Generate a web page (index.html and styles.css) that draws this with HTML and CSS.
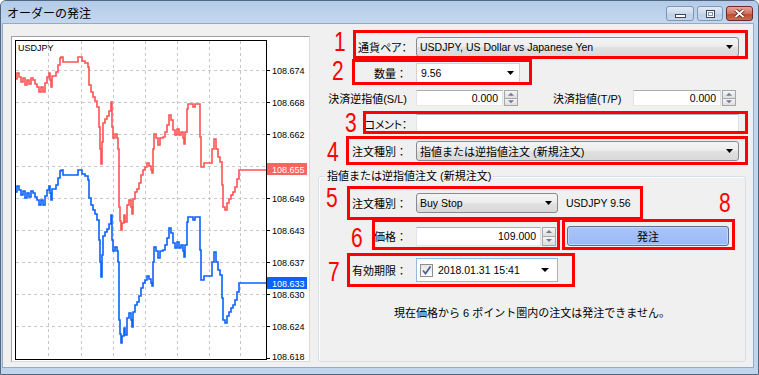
FILE: index.html
```html
<!DOCTYPE html>
<html lang="ja">
<head>
    <meta charset="UTF-8">
    <title>オーダーの発注</title>
    <link rel="stylesheet" href="styles.css">
</head>
<body>
<div class="window">
    <div class="titlebar">
        <span class="title">オーダーの発注</span>
        <div class="caption">
            <span class="cbtn"><i class="g-min"></i></span>
            <span class="cbtn"><i class="g-max"></i></span>
            <span class="cbtn close">
                <svg width="13" height="9" viewBox="0 0 13 9"><path d="M2.5 1L10.5 8M10.5 1L2.5 8" stroke="#4b1a14" stroke-width="3.4"/><path d="M2.5 1L10.5 8M10.5 1L2.5 8" stroke="#fff" stroke-width="1.8"/></svg>
            </span>
        </div>
    </div>

    <div class="client">
        <div class="chart-panel">
            <svg width="297" height="324" viewBox="12 37 297 324">
                <defs>
                    <clipPath id="plot"><rect x="16" y="41" width="250" height="318"/></clipPath>
                    <path id="price" d="M15 192H17V186H19V190H21V195H23V191H25V198H27V193H29V197H31V191H33V193H35V197H37V200H39V205H41V200H43V205H45V196H47V190H49V186H50V193H51V200H52V189H56V185H58V178H60V171H61V170H63V175H78V170H82V174H85V176H88V180H89V198H91V205H93V210H95V214H97V220H99V240H100V262H101V277H102V255H103V236H105V232H107V229H109V224H111V215H112V240H113V251H115V247H117V251H118V262H119V320H120V334H121V343H122V336H124V328H125V335H127V318H129V313H131V320H132V327H133V312H135V305H137V302H139V296H141V288H143V283H145V280H147V276H149V279H151V283H152V286H153V262H154V247H156V251H158V258H160V251H163V250H165V245H167V238H169V228H171V233H173V243H175V248H177V242H179V248H181V245H183V251H184V257H185V245H187V222H188V217H193V220H195V217H200V250H201V280H204V276H212V262H214V252H216V262H218V270H220V275H222V298H223V320H225V323H227V316H229V312H231V308H233V305H235V300H237V292H239V283H266"/>
                </defs>
                <g class="grid">
                    <path d="M48.5 41V359M81.5 41V359M113.5 41V359M145.5 41V359M177.5 41V359M209.5 41V359M240.5 41V359"/>
                    <path d="M16 70.5H266M16 102.5H266M16 134.5H266M16 166.5H266M16 198.5H266M16 230.5H266M16 262.5H266M16 294.5H266M16 326.5H266"/>
                </g>
                <g clip-path="url(#plot)" fill="none" stroke-width="1.6">
                    <use href="#price" class="bid"/>
                    <use href="#price" class="ask" transform="translate(0,-113)"/>
                </g>
                <rect class="frame" x="15.5" y="40.5" width="251" height="319"/>
                <path class="ticks" d="M266 70.5H270M266 102.5H270M266 134.5H270M266 198.5H270M266 230.5H270M266 262.5H270M266 294.5H270M266 326.5H270M266 358.5H270"/>
                <text class="sym" x="18" y="51">USDJPY</text>
                <g class="ax">
                    <text x="272" y="74">108.674</text>
                    <text x="272" y="106">108.668</text>
                    <text x="272" y="138">108.662</text>
                    <text x="272" y="202">108.649</text>
                    <text x="272" y="234">108.643</text>
                    <text x="272" y="266">108.637</text>
                    <text x="272" y="298">108.630</text>
                    <text x="272" y="330">108.624</text>
                    <text x="272" y="360">108.618</text>
                </g>
                <rect class="tag-ask" x="267" y="163" width="40" height="12"/>
                <text class="ax tag-text" x="272" y="172.5">108.655</text>
                <rect class="tag-bid" x="267" y="277" width="40" height="12"/>
                <text class="ax tag-text" x="272" y="286.5">108.633</text>
            </svg>
        </div>

        <div class="form">
            <div class="row r1">
                <span class="lbl kana">通貨ペア：</span>
                <div class="combo w-full"><span class="v">USDJPY, US Dollar vs Japanese Yen</span><b class="arrow"></b></div>
            </div>
            <div class="row r2">
                <span class="lbl">数量：</span>
                <div class="edit-combo w-vol"><span class="v">9.56</span><b class="arrow"></b></div>
            </div>
            <div class="row r3">
                <span class="lbl">決済逆指値(S/L)</span>
                <div class="spin w-sl"><span class="spin-val v">0.000</span><span class="spinner"><i class="up"></i><i class="dn"></i></span></div>
                <span class="lbl2">決済指値(T/P)</span>
                <div class="spin w-tp"><span class="spin-val v">0.000</span><span class="spinner"><i class="up"></i><i class="dn"></i></span></div>
            </div>
            <div class="row r4">
                <span class="lbl kana tight">コメント：</span>
                <div class="edit w-full"></div>
            </div>
            <div class="row r5">
                <span class="lbl">注文種別：</span>
                <div class="combo w-full"><span>指値または逆指値注文 (新規注文)</span><b class="arrow"></b></div>
            </div>

            <fieldset class="group">
                <legend>指値または逆指値注文 (新規注文)</legend>
                <div class="row r6">
                    <span class="lbl">注文種別：</span>
                    <div class="combo w-type"><span class="v">Buy Stop</span><b class="arrow"></b></div>
                    <span class="info v">USDJPY 9.56</span>
                </div>
                <div class="row r7">
                    <span class="lbl">価格：</span>
                    <div class="spin w-price"><span class="spin-val v">109.000</span><span class="spinner"><i class="up"></i><i class="dn"></i></span></div>
                    <span class="btn">発注</span>
                </div>
                <div class="row r8">
                    <span class="lbl">有効期限：</span>
                    <div class="date">
                        <span class="chk"><svg width="11" height="11" viewBox="0 0 11 11"><path d="M2 5.5L4.5 8.5L9.5 1.5" fill="none" stroke="#4d5f94" stroke-width="1.7"/></svg></span>
                        <span class="v">2018.01.31 15:41</span>
                        <b class="arrow"></b>
                    </div>
                </div>
                <p class="msg">現在価格から 6 ポイント圏内の注文は発注できません。</p>
            </fieldset>
        </div>
    </div>

    <!-- red annotation overlay -->
    <div class="marks">
        <div class="rbox b1"></div><span class="mnum n1">1</span>
        <div class="rbox b2"></div><span class="mnum n2">2</span>
        <div class="rbox b3"></div><span class="mnum n3">3</span>
        <div class="rbox b4"></div><span class="mnum n4">4</span>
        <div class="rbox b5"></div><span class="mnum n5">5</span>
        <div class="rbox b6"></div><span class="mnum n6">6</span>
        <div class="rbox b7"></div><span class="mnum n7">7</span>
        <div class="rbox b8"></div><span class="mnum n8">8</span>
    </div>
</div>
</body>
</html>
```

FILE: styles.css
```css
* {
    box-sizing: border-box;
}
html, body {
    margin: 0;
    padding: 0;
}
body {
    width: 759px;
    height: 375px;
    overflow: hidden;
    background: #fff;
    font-family: "Liberation Sans", "Noto Sans CJK JP", sans-serif;
    font-size: 11px;
    color: #000;
}
.window {
    position: relative;
    width: 759px;
    height: 375px;
    display: flex;
    flex-direction: column;
    background: #c1d5ec;
    border: 1px solid #51667f;
    border-radius: 6px 6px 0 0;
}

/* title bar */
.titlebar {
    height: 23px;
    flex: none;
    display: flex;
    justify-content: space-between;
    align-items: flex-start;
    background: linear-gradient(#b3cbe8, #c4d8ef);
    border-radius: 5px 5px 0 0;
}
.title {
    margin: 4px 0 0 6px;
    font-family: "Noto Sans CJK JP", sans-serif;
    font-size: 12px;
    line-height: 16px;
}
.caption {
    display: flex;
    gap: 3px;
    margin: 5px 5px 0 0;
}
.cbtn {
    width: 26px;
    height: 15px;
    display: flex;
    align-items: center;
    justify-content: center;
    border: 1px solid #7f95b3;
    border-radius: 3px;
    background: linear-gradient(#e2ebf6, #cad9ec 50%, #bccfe7 51%, #c7d8ed);
}
.cbtn:first-child {
    width: 28px;
}
.cbtn.close {
    width: 27px;
    border-color: #6e2b25;
    background: linear-gradient(#e3a69a, #d1705f 50%, #c1452f 51%, #cf6a55);
}
.g-min {
    width: 11px;
    height: 4px;
    margin-top: 5px;
    background: #fff;
    border: 1px solid #39465a;
}
.g-max {
    width: 9px;
    height: 8px;
    background: #fff;
    border: 1px solid #39465a;
    box-shadow: inset 0 0 0 1px #fff, inset 0 0 0 2px #8294ad;
}

/* client area */
.client {
    flex: 1;
    display: flex;
    margin: 0 5px 7px 2px;
    padding: 12px 7px 0 8px;
    background: #f0f0f0;
    box-shadow: 0 0 0 1px #94abc7;
}
.chart-panel {
    width: 299px;
    height: 326px;
    flex: none;
    background: #fff;
    border: 1px solid;
    border-color: #a0a0a0 #dadada #dadada #a0a0a0;
}
.chart-panel svg {
    display: block;
}
.grid path {
    stroke: #c6c6c6;
    stroke-width: 1;
    stroke-dasharray: 3 3;
    fill: none;
}
.frame {
    fill: none;
    stroke: #000;
}
.ticks {
    stroke: #000;
}
.bid {
    stroke: #0a62ff;
}
.ask {
    stroke: #ff5252;
}
.ax text, text.ax {
    font-family: "Liberation Sans", sans-serif;
    font-size: 9px;
    fill: #000;
}
.sym {
    font-family: "Liberation Sans", sans-serif;
    font-size: 9px;
    fill: #000;
}
.tag-ask {
    fill: #fb6262;
}
.tag-bid {
    fill: #0a62ff;
}
text.tag-text {
    fill: #fff;
}

/* order form */
.form {
    width: 428px;
    margin-left: 8px;
    padding-top: 1px;
    display: flex;
    flex-direction: column;
}
.row {
    display: flex;
    align-items: center;
}
.lbl {
    width: 98px;
    flex: none;
    padding-right: 9px;
    text-align: right;
    white-space: nowrap;
}
.kana {
    font-feature-settings: "palt";
}
.tight {
    letter-spacing: -0.3px;
}
.v {
    font-size: 10.5px;
}
.r1, .r2, .r4, .r5 {
    height: 20px;
}
.r2 { margin-top: 6px; }
.r3 { margin-top: 7px; height: 16px; }
.r4 { margin-top: 8px; }
.r5 { margin-top: 7px; }

.w-full { width: 323px; }
.w-vol { width: 104px; }
.w-type { width: 142px; }

.combo {
    height: 20px;
    display: flex;
    align-items: center;
    padding-left: 3px;
    border: 1px solid #8a8a8a;
    border-radius: 3px;
    background: linear-gradient(#f4f4f4, #ececec 50%, #e1e1e1 51%, #d9d9d9);
    white-space: nowrap;
}
.edit-combo {
    height: 20px;
    display: flex;
    align-items: center;
    padding-left: 4px;
    background: #fff;
    border: 1px solid #d2d2d2;
}
.edit {
    height: 20px;
    background: #fff;
    border: 1px solid;
    border-color: #abadb3 #dbdfe6 #e3e9ef #e2e3ea;
}
.arrow {
    width: 7px;
    height: 4px;
    margin-left: auto;
    margin-right: 5px;
    background: #000;
    clip-path: polygon(0 0, 100% 0, 50% 100%);
}

/* numeric fields with spinner */
.spin {
    height: 16px;
    display: flex;
}
.w-sl { width: 102px; }
.w-tp { width: 103px; }
.w-price { width: 140px; height: 19px; }
.spin-val {
    flex: 1;
    display: flex;
    align-items: center;
    justify-content: flex-end;
    padding-right: 4px;
    background: #fff;
    border: 1px solid;
    border-color: #abadb3 #dbdfe6 #e3e9ef #e2e3ea;
}
.spinner {
    width: 14px;
    margin-left: 1px;
    display: flex;
    flex-direction: column;
}
.spinner i {
    flex: 1;
    position: relative;
    border: 1px solid #a7a7a7;
    background: linear-gradient(#f5f5f5, #dedede);
}
.spinner i.dn {
    border-top: none;
}
.spinner i::after {
    content: "";
    position: absolute;
    left: 3px;
    top: 50%;
    width: 6px;
    height: 3px;
    margin-top: -1.5px;
    background: #6c7a96;
    clip-path: polygon(50% 0, 100% 100%, 0 100%);
}
.spinner i.dn::after {
    clip-path: polygon(0 0, 100% 0, 50% 100%);
}
.lbl2 {
    width: 80px;
    margin-left: 35px;
    white-space: nowrap;
}

/* group box */
.group {
    margin: 8px 0 0;
    padding: 10px 0 0;
    height: 193px;
    min-width: 0;
    border: 1px solid #d5dfe5;
    border-radius: 3px;
    box-shadow: inset 1px 1px 0 #fff;
}
.group legend {
    margin-left: 6px;
    padding: 0 2px;
    line-height: 14px;
}
.group .lbl {
    width: 97px;
}
.r6 { height: 20px; }
.r7 { margin-top: 13px; height: 20px; }
.r8 { margin-top: 12px; height: 24px; }
.info {
    margin-left: 8px;
}
.btn {
    width: 162px;
    height: 20px;
    margin-left: 11px;
    display: flex;
    align-items: center;
    justify-content: center;
    border: 1px solid #5b6f95;
    border-radius: 3px;
    background: linear-gradient(#a9c5f9, #9bb9f6);
    box-shadow: inset 0 0 0 1px #c0d4fa;
}
.date {
    width: 142px;
    height: 24px;
    display: flex;
    align-items: center;
    padding-left: 3px;
    background: #fff;
    border: 1px solid #93b9e4;
    white-space: nowrap;
}
.chk {
    width: 13px;
    height: 13px;
    flex: none;
    margin-right: 5px;
    display: flex;
    align-items: center;
    justify-content: center;
    border: 1px solid #8e8f8f;
    background: linear-gradient(#e6e6e6, #fbfbfb);
}
.date .arrow {
    width: 8px;
    margin-right: 8px;
}
.msg {
    margin: 24px 0 0;
    line-height: 14px;
    text-align: center;
}

/* red annotation overlay */
.marks {
    position: absolute;
    left: -1px;
    top: -1px;
    width: 759px;
    height: 375px;
    pointer-events: none;
}
.rbox {
    position: absolute;
    border: 3px solid #ff0000;
}
.b1 { left: 353px; top: 30px; width: 395px; height: 29px; }
.b2 { left: 352px; top: 59px; width: 180px; height: 26px; }
.b3 { left: 363px; top: 111px; width: 385px; height: 23px; }
.b4 { left: 346px; top: 136px; width: 402px; height: 29px; }
.b5 { left: 347px; top: 186px; width: 296px; height: 34px; }
.b6 { left: 372px; top: 219px; width: 188px; height: 31px; }
.b7 { left: 347px; top: 253px; width: 228px; height: 34px; }
.b8 { left: 562px; top: 219px; width: 173px; height: 31px; }
.mnum {
    position: absolute;
    font-family: "Liberation Sans", sans-serif;
    font-size: 28px;
    line-height: 28px;
    color: #ff0000;
    transform: scaleX(0.75);
    transform-origin: left top;
}
.n1 { left: 334px; top: 28px; }
.n2 { left: 332px; top: 57px; }
.n3 { left: 345px; top: 109px; }
.n4 { left: 327px; top: 138px; }
.n5 { left: 326px; top: 184px; }
.n6 { left: 351px; top: 224px; }
.n7 { left: 328px; top: 258px; }
.n8 { left: 719px; top: 189px; }
```
